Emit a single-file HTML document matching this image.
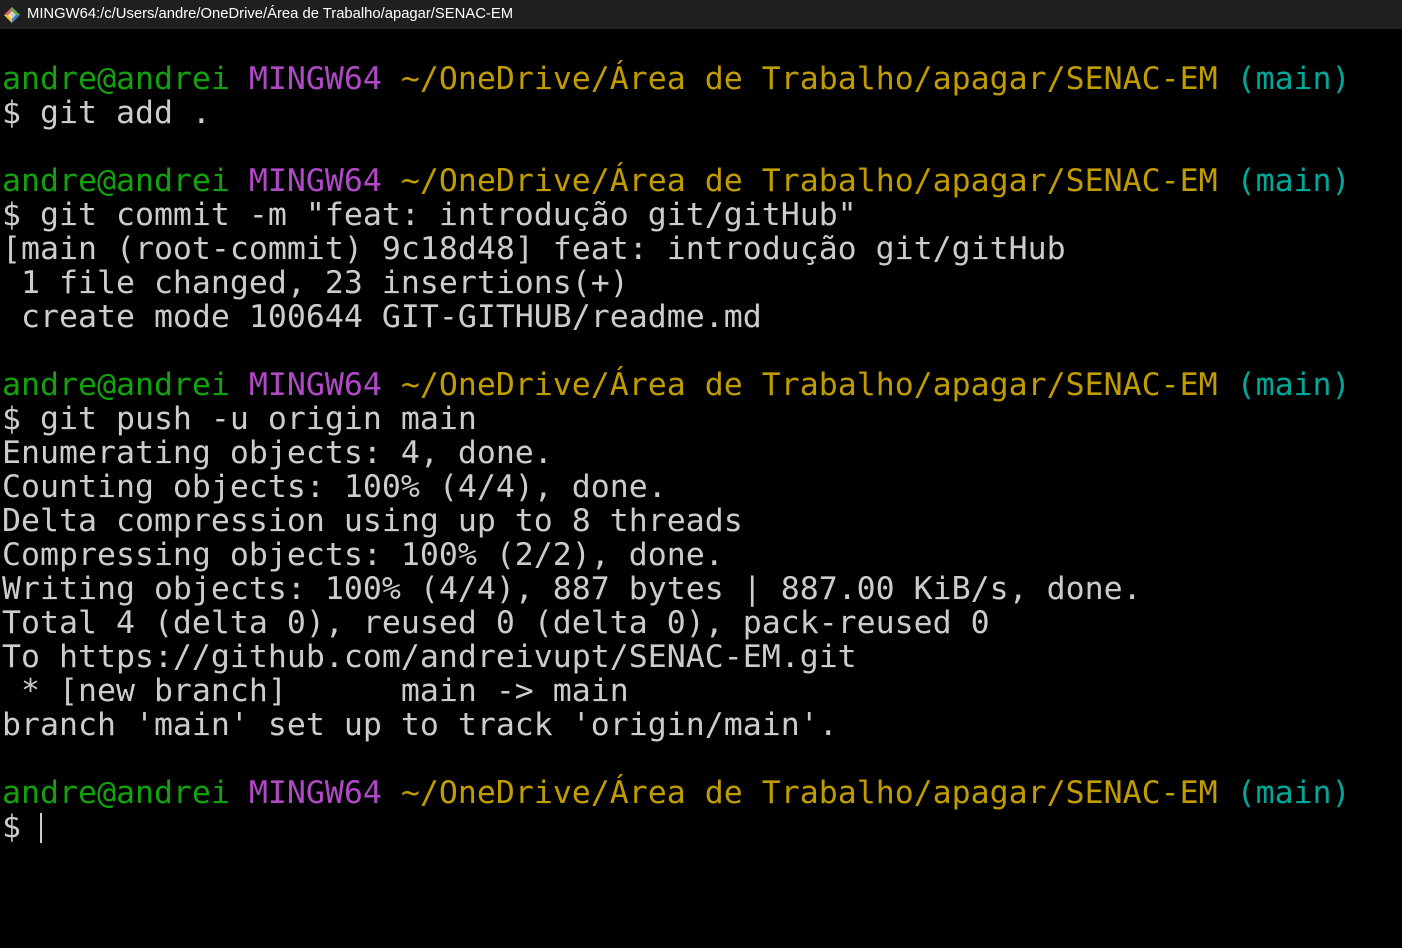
<!DOCTYPE html>
<html><head><meta charset="utf-8"><style>
html,body{margin:0;padding:0;background:#000;width:1402px;height:948px;overflow:hidden}
.t{height:29px;background:#1f1f1f;color:#fff;font:14.8px "Liberation Sans",sans-serif;line-height:29px;padding-left:27px;position:relative}
.t svg{position:absolute;left:4px;top:7px}
pre{margin:0;padding:33px 0 0 2px;font-family:"DejaVu Sans Mono",monospace;font-size:31.55px;line-height:34px;color:#cccccc;white-space:pre}
.g{color:#13a10e}.m{color:#b148c6}.y{color:#c19c00}.c{color:#00a89a}
.cur{display:inline-block;width:2px;height:30px;background:#ccc;vertical-align:-6px}
</style></head><body>
<div class="t"><svg width="16" height="16" viewBox="0 0 16 16"><path d="M8 0L16 8 8 16 0 8Z" fill="#4a78c2"/><path d="M8 0L16 8 8 8Z" fill="#6aa84f"/><path d="M0 8L8 0 8 8Z" fill="#e06060"/><path d="M0 8L8 16 8 8Z" fill="#f2c12e"/><path d="M4 8L8 4 12 8 8 12Z" fill="#fff" opacity=".6"/></svg>MINGW64:/c/Users/andre/OneDrive/Área de Trabalho/apagar/SENAC-EM</div>
<pre><span class="g">andre@andrei</span> <span class="m">MINGW64</span> <span class="y">~/OneDrive/Área de Trabalho/apagar/SENAC-EM</span> <span class="c">(main)</span>
$ git add .

<span class="g">andre@andrei</span> <span class="m">MINGW64</span> <span class="y">~/OneDrive/Área de Trabalho/apagar/SENAC-EM</span> <span class="c">(main)</span>
$ git commit -m "feat: introdução git/gitHub"
[main (root-commit) 9c18d48] feat: introdução git/gitHub
 1 file changed, 23 insertions(+)
 create mode 100644 GIT-GITHUB/readme.md

<span class="g">andre@andrei</span> <span class="m">MINGW64</span> <span class="y">~/OneDrive/Área de Trabalho/apagar/SENAC-EM</span> <span class="c">(main)</span>
$ git push -u origin main
Enumerating objects: 4, done.
Counting objects: 100% (4/4), done.
Delta compression using up to 8 threads
Compressing objects: 100% (2/2), done.
Writing objects: 100% (4/4), 887 bytes | 887.00 KiB/s, done.
Total 4 (delta 0), reused 0 (delta 0), pack-reused 0
To https://github.com/andreivupt/SENAC-EM.git
 * [new branch]      main -> main
branch 'main' set up to track 'origin/main'.

<span class="g">andre@andrei</span> <span class="m">MINGW64</span> <span class="y">~/OneDrive/Área de Trabalho/apagar/SENAC-EM</span> <span class="c">(main)</span>
$ <span class="cur"></span></pre>
</body></html>
